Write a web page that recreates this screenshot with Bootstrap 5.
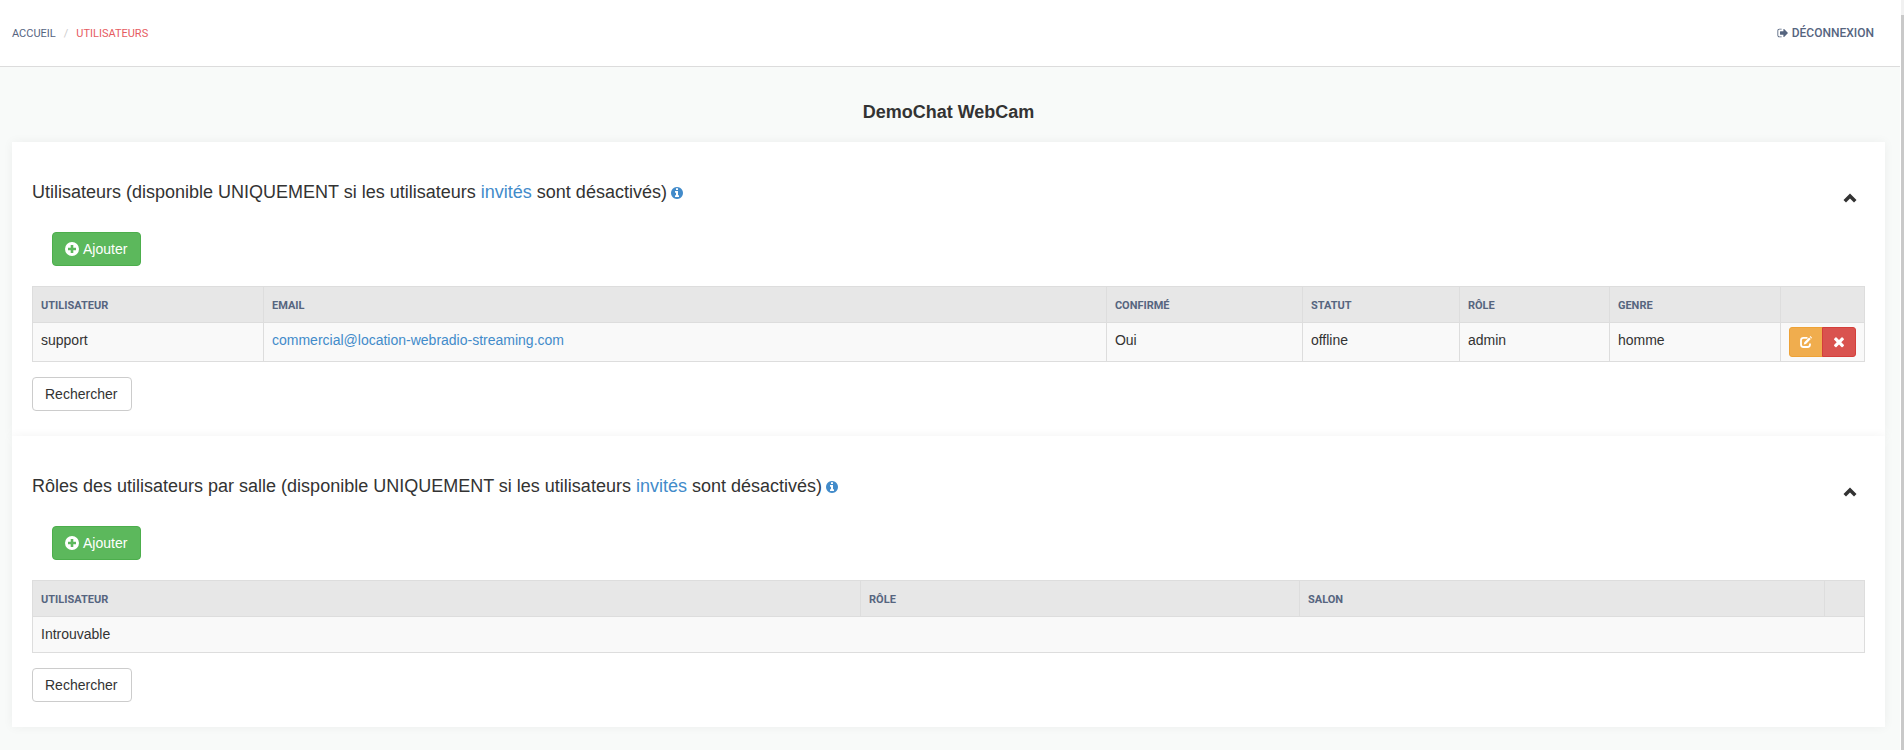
<!DOCTYPE html>
<html lang="fr">
<head>
<meta charset="utf-8">
<meta name="viewport" content="width=device-width, initial-scale=1">
<title>DemoChat WebCam - Utilisateurs</title>
<link href="https://cdn.jsdelivr.net/npm/bootstrap@5.3.0/dist/css/bootstrap.min.css" rel="stylesheet">
<style>
  body { font-family: "Liberation Sans", Arial, sans-serif; font-size: 14px; line-height: 20px; color: #333; background: #f8faf9; }
  a { color: #428bca; text-decoration: none; }
  svg { fill: currentColor; }
  .topbar { height: 67px; padding: 0 26px 0 12px; border-bottom: 1px solid #dcdcdc; font-family: Roboto, sans-serif; text-transform: uppercase; }
  .topbar a { color: #56657f; }
  .topbar .breadcrumb { --bs-breadcrumb-divider-color: #ccc; --bs-breadcrumb-item-padding-x: 8px; font-size: 11px; padding-top: 2px; }
  .topbar .breadcrumb .active { color: #e65c5f; }
  .topbar .signout { font-size: 12px; font-weight: 500; gap: 3px; }
  .scroll-strip { width: 4px; padding-top: 15px; background: #f1f1f1; border-left: 1px solid #fff; }
  .scroll-thumb { background: #c9c9c9; }
  .page-title { font-size: 18px; line-height: 20px; font-weight: 700; padding: 35px 0 20px; }
  .content-area { padding: 0 15px 24px 12px; }
  .panel-block { background: #fff; padding: 40px 20px 25px; box-shadow: 0 0 10px rgba(0,0,0,.05); }
  .panel-block h2 { font-size: 18px; line-height: 20px; font-weight: 400; }
  .panel-head { height: 50px; }
  .panel-toggle { color: #333; margin-right: 8px; padding-top: 8px; line-height: 14px; }
  .btn { --bs-btn-font-size: 14px; --bs-btn-line-height: 20px; --bs-btn-padding-x: 12px; --bs-btn-padding-y: 6px; --bs-btn-border-radius: 4px; }
  .btn-add { --bs-btn-bg: #5cb85c; --bs-btn-border-color: #4cae4c; --bs-btn-color: #fff; min-width: 89px; margin: 0 0 20px 20px; }
  .btn-search { --bs-btn-bg: #fff; --bs-btn-border-color: #ccc; --bs-btn-color: #333; min-width: 100px; }
  .btn-group-sm > .btn { --bs-btn-font-size: 12px; --bs-btn-line-height: 18px; --bs-btn-padding-x: 10px; --bs-btn-padding-y: 5px; --bs-btn-border-radius: 3px; --bs-btn-color: #fff; }
  .btn-edit { --bs-btn-bg: #f0ad4e; --bs-btn-border-color: #eea236; }
  .btn-remove { --bs-btn-bg: #d9534f; --bs-btn-border-color: #d43f3a; }
  .grid-table { table-layout: fixed; margin-bottom: 15px; border-color: #ddd; }
  .grid-table > :not(caption) > * > * { padding: 7px 8px 8px; color: #333; background: #f9f9f9; box-shadow: none; }
  .grid-table > thead > tr > th { background: #e7e7e7; color: #56657f; font: 700 11px/18px Roboto, sans-serif; text-transform: uppercase; padding: 10px 8px 7px; }
  .grid-table > tbody > tr > td.actions-cell { padding: 4px 8px; }
</style>
</head>
<body>
<div class="d-flex min-vh-100">
<div class="flex-grow-1">
  <header class="topbar bg-white d-flex align-items-center justify-content-between">
    <nav aria-label="Fil d'Ariane">
      <ol class="breadcrumb mb-0">
        <li class="breadcrumb-item"><a href="#">Accueil</a></li>
        <li class="breadcrumb-item active" aria-current="page">Utilisateurs</li>
      </ol>
    </nav>
    <a href="#" class="signout d-flex align-items-center">
      <svg width="12" height="12" viewBox="100 0 1600 1792" aria-hidden="true"><path d="M704 1440q0 4 1 20t.5 26.5-3 23.5-10 19.5-20.5 6.5h-320q-119 0-203.5-84.5t-84.5-203.5v-704q0-119 84.5-203.5t203.5-84.5h320q13 0 22.500 9.500t9.500 22.500q0 4 1 20t.5 26.500-3 23.500-10 19.500-20.500 6.500h-320q-66 0-113 47t-47 113v704q0 66 47 113t113 47h312l11.500 1 11.500 3 8 5.500 7 9 2 13.500zm928-544q0 26-19 45l-544 544q-19 19-45 19t-45-19-19-45v-288h-448q-26 0-45-19t-19-45v-384q0-26 19-45t45-19h448v-288q0-26 19-45t45-19 45 19l544 544q19 19 19 45z"/></svg>
      Déconnexion</a>
  </header>
  <main class="content-area">
    <h1 class="page-title text-center mb-0">DemoChat WebCam</h1>

    <section class="panel-block">
      <div class="panel-head d-flex justify-content-between align-items-start">
        <h2 class="mb-0">Utilisateurs (disponible UNIQUEMENT si les utilisateurs <a href="#">invités</a> sont désactivés)<a href="#" aria-label="Information"><svg class="ms-1" width="12" height="12" viewBox="128 128 1536 1536"><path d="M1152 1376v-160q0-14-9-23t-23-9h-96v-512q0-14-9-23t-23-9h-320q-14 0-23 9t-9 23v160q0 14 9 23t23 9h96v320h-96q-14 0-23 9t-9 23v160q0 14 9 23t23 9h448q14 0 23-9t9-23zm-128-896v-160q0-14-9-23t-23-9h-192q-14 0-23 9t-9 23v160q0 14 9 23t23 9h192q14 0 23-9t9-23zm640 416q0 209-103 385.5t-279.5 279.5-385.5 103-385.5-103-279.5-279.5-103-385.5 103-385.5 279.5-279.5 385.5-103 385.5 103 279.5 279.5 103 385.5z"/></svg></a></h2>
        <a href="#" class="panel-toggle" aria-label="Replier"><svg width="14" height="10" viewBox="0 0 14 10"><path d="M7 .5 13.5 7 11 9.5l-4-4-4 4L.5 7z"/></svg></a>
      </div>
      <button type="button" class="btn btn-add d-flex align-items-center gap-1"><svg width="14" height="14" viewBox="0 0 14 14" aria-hidden="true"><path fill-rule="evenodd" d="M7 0a7 7 0 1 1 0 14A7 7 0 0 1 7 0zM5.700 3v2.700H3v2.600h2.700V11h2.600V8.300H11V5.700H8.300V3z"/></svg>Ajouter</button>
      <table class="table table-bordered grid-table">
        <colgroup><col style="width:12.61%"><col style="width:46.01%"><col style="width:10.7%"><col style="width:8.57%"><col style="width:8.19%"><col style="width:9.33%"><col></colgroup>
        <thead><tr><th>Utilisateur</th><th>Email</th><th>Confirmé</th><th>Statut</th><th>Rôle</th><th>Genre</th><th></th></tr></thead>
        <tbody>
          <tr><td>support</td><td><a href="#">commercial@location-webradio-streaming.com</a></td><td>Oui</td><td>offline</td><td>admin</td><td>homme</td>
            <td class="actions-cell"><div class="btn-group btn-group-sm d-flex">
              <button type="button" class="btn btn-edit" aria-label="Modifier"><svg class="d-block m-auto" width="12" height="18" viewBox="0 -3 12 18"><path fill="none" stroke="currentColor" stroke-width="1.800" d="M7.500 1.800H3.500Q1 1.800 1 4.300v4.200Q1 11 3.500 11h4Q10 11 10 8.500V7.500"/><path d="m4.300 6.200 4.800-4.800 1.700 1.700L6 7.900l-2.200.5zM9.700.8l.7-.7 1.700 1.700-.7.7z"/></svg></button>
              <button type="button" class="btn btn-remove" aria-label="Supprimer"><svg class="d-block m-auto" width="12" height="18" viewBox="182 -149 1428 2142"><path d="M1490 1322q0 40-28 68l-136 136q-28 28-68 28t-68-28l-294-294-294 294q-28 28-68 28t-68-28l-136-136q-28-28-28-68t28-68l294-294-294-294q-28-28-28-68t28-68l136-136q28-28 68-28t68 28l294 294 294-294q28-28 68-28t68 28l136 136q28 28 28 68t-28 68l-294 294 294 294q28 28 28 68z"/></svg></button>
            </div></td></tr>
        </tbody>
      </table>
      <button type="button" class="btn btn-search text-start d-block">Rechercher</button>
    </section>

    <section class="panel-block">
      <div class="panel-head d-flex justify-content-between align-items-start">
        <h2 class="mb-0">Rôles des utilisateurs par salle (disponible UNIQUEMENT si les utilisateurs <a href="#">invités</a> sont désactivés)<a href="#" aria-label="Information"><svg class="ms-1" width="12" height="12" viewBox="128 128 1536 1536"><path d="M1152 1376v-160q0-14-9-23t-23-9h-96v-512q0-14-9-23t-23-9h-320q-14 0-23 9t-9 23v160q0 14 9 23t23 9h96v320h-96q-14 0-23 9t-9 23v160q0 14 9 23t23 9h448q14 0 23-9t9-23zm-128-896v-160q0-14-9-23t-23-9h-192q-14 0-23 9t-9 23v160q0 14 9 23t23 9h192q14 0 23-9t9-23zm640 416q0 209-103 385.5t-279.5 279.5-385.5 103-385.5-103-279.5-279.5-103-385.5 103-385.5 279.5-279.5 385.5-103 385.5 103 279.5 279.5 103 385.5z"/></svg></a></h2>
        <a href="#" class="panel-toggle" aria-label="Replier"><svg width="14" height="10" viewBox="0 0 14 10"><path d="M7 .5 13.5 7 11 9.5l-4-4-4 4L.5 7z"/></svg></a>
      </div>
      <button type="button" class="btn btn-add d-flex align-items-center gap-1"><svg width="14" height="14" viewBox="0 0 14 14" aria-hidden="true"><path fill-rule="evenodd" d="M7 0a7 7 0 1 1 0 14A7 7 0 0 1 7 0zM5.700 3v2.700H3v2.600h2.700V11h2.600V8.300H11V5.700H8.300V3z"/></svg>Ajouter</button>
      <table class="table table-bordered grid-table">
        <colgroup><col style="width:45.2%"><col style="width:23.96%"><col style="width:28.66%"><col></colgroup>
        <thead><tr><th>Utilisateur</th><th>Rôle</th><th>Salon</th><th></th></tr></thead>
        <tbody><tr><td colspan="4">Introuvable</td></tr></tbody>
      </table>
      <button type="button" class="btn btn-search text-start d-block">Rechercher</button>
    </section>
  </main>
</div>
<div class="scroll-strip d-flex flex-column flex-shrink-0" aria-hidden="true"><div class="scroll-thumb flex-grow-1"></div></div>
</div>
<script src="https://cdn.jsdelivr.net/npm/bootstrap@5.3.0/dist/js/bootstrap.bundle.min.js"></script>
</body>
</html>
